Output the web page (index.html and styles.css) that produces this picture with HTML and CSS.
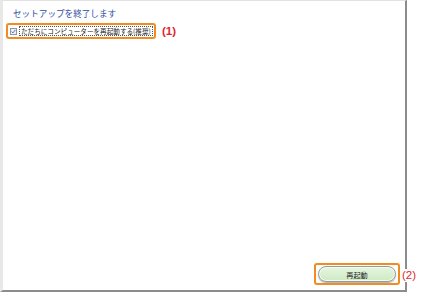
FILE: index.html
```html
<!DOCTYPE html>
<html lang="ja">
<head>
<meta charset="utf-8">
<link rel="stylesheet" href="styles.css">
</head>
<body>
<div class="window">
  <div class="title">セットアップを終了します</div>
  <div class="check-row">
    <div class="hl check-box">
      <svg class="cb" width="7" height="7" viewBox="0 0 7 7">
        <rect x="0.5" y="0.5" width="6" height="6" fill="#eef1f6" stroke="#8c96a8"/>
        <path d="M1.6 3.6 L2.9 4.9 L5.4 1.9" fill="none" stroke="#5a70b0" stroke-width="1"/>
      </svg>
      <span class="label">ただちにコンピューターを再起動する(推奨)</span>
    </div>
    <span class="mark">(1)</span>
  </div>
  <div class="spacer"></div>
  <div class="bottom">
    <div class="hl btn-wrap">
      <div class="btn">再起動</div>
      <span class="mark mark2">(2)</span>
    </div>
  </div>
</div>
</body>
</html>
```
FILE: styles.css
```css
html, body {
  margin: 0;
  padding: 0;
  background: #fff;
}
body {
  font-family: "Noto Sans CJK JP", "Noto Sans", sans-serif;
}
.window {
  box-sizing: border-box;
  width: 407px;
  height: 292px;
  border-top: 1px solid #e2e2e2;
  border-left: 3px solid #e8e8e8;
  border-right: 2px solid #8c8c8c;
  border-bottom: 2px solid #8c8c8c;
  display: flex;
  flex-direction: column;
  padding: 6px 0 0 3px;
}
.title {
  padding-left: 7px;
  font-size: 8.6px;
  line-height: 12px;
  color: #2b4ea0;
}
.check-row {
  margin-top: 4px;
  display: flex;
  align-items: center;
  gap: 6px;
}
.hl {
  box-sizing: border-box;
  border: 2px solid #ef8d22;
  border-radius: 3px;
}
.check-box {
  width: 150px;
  height: 16px;
  display: flex;
  align-items: center;
  padding-left: 2px;
  gap: 2px;
}
.cb {
  display: block;
  flex: none;
}
.label {
  font-size: 6.6px;
  line-height: 8px;
  color: #222;
  border: 1px dotted #555;
  padding: 0 1px;
  white-space: nowrap;
}
.mark {
  font-family: "Liberation Sans", Arial, sans-serif;
  font-size: 11.5px;
  font-weight: bold;
  color: #e0262e;
  line-height: 13px;
}
.spacer {
  flex: 1;
}
.bottom {
  display: flex;
  justify-content: flex-end;
  padding: 0 5px 5px 0;
}
.btn-wrap {
  position: relative;
  width: 86px;
  height: 22px;
  padding: 1px 2px;
  display: flex;
}
.btn {
  flex: 1;
  box-sizing: border-box;
  border: 1px solid #9a9a9a;
  border-radius: 9px;
  background: linear-gradient(#e6f6df, #cdeac4);
  box-shadow: inset 0 0 0 1px #f4fbf1, 0 1px 1px #b0b0b0;
  font-size: 7.2px;
  line-height: 17px;
  text-align: center;
  color: #222;
}
.mark2 {
  position: absolute;
  left: calc(100% + 3px);
  top: 4px;
  font-weight: normal;
  background: #fff;
  padding: 0 1px;
}
```
